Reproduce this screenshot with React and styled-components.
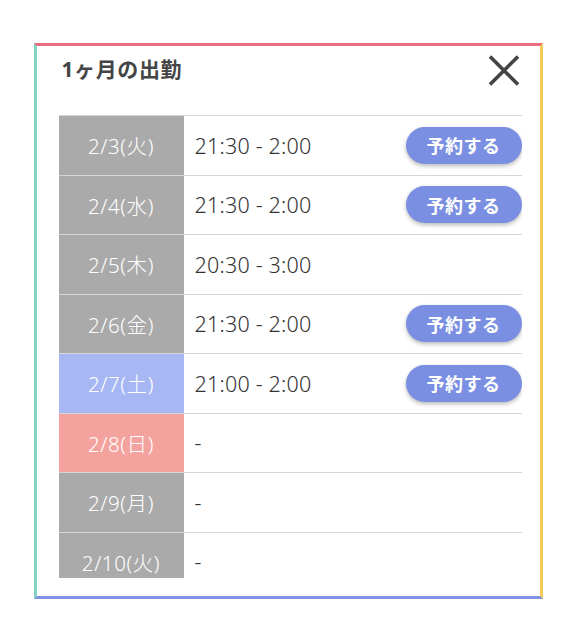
import React from "react";
import styled, { createGlobalStyle } from "styled-components";

const GlobalStyle = createGlobalStyle`
  html, body { margin: 0; padding: 0; background: #ffffff; }
  body { font-family: "Noto Sans", "Noto Sans CJK JP", sans-serif; }
  * { box-sizing: border-box; }
`;

const Card = styled.section`
  width: 509px;
  height: 556px;
  margin: 43px auto 0;
  background: #fff;
  border-top: 3px solid #ea6a80;
  border-right: 3px solid #f3cb5a;
  border-bottom: 3px solid #7f93e4;
  border-left: 3px solid #84d2c4;
  padding: 0 18px 18px 22px;
  display: flex;
  flex-direction: column;
`;

const Header = styled.header`
  height: 69px;
  flex: none;
  display: flex;
  justify-content: space-between;
  align-items: flex-start;
`;

const Title = styled.h2`
  margin: 8px 0 0 3px;
  font-family: "Noto Sans", "Noto Sans CJK JP", sans-serif;
  font-size: 21px;
  line-height: 30px;
  font-weight: 700;
  color: #454545;
  letter-spacing: 0.6px;
`;

const CloseButton = styled.button`
  margin: 9px 2px 0 0;
  padding: 0;
  width: 32px;
  height: 31px;
  border: none;
  background: none;
  display: flex;
  align-items: center;
  justify-content: center;
  cursor: pointer;
`;

const Scroller = styled.div`
  flex: 1;
  min-height: 0;
  overflow-y: auto;
  scrollbar-width: none;
  &::-webkit-scrollbar { display: none; }
  border-top: 1px solid #d6d6d6;
`;

const Row = styled.div`
  display: grid;
  grid-template-columns: 125px 1fr;
  height: 59.5px;
  border-bottom: 1px solid #d6d6d6;
`;

const dayColors = {
  weekday: "#aaaaaa",
  sat: "#a7b7f4",
  sun: "#f4a29e",
};

const DateCell = styled.div`
  background: ${(p) => dayColors[p.$kind]};
  color: #fff;
  display: flex;
  align-items: center;
  justify-content: center;
  font-size: 20.5px;
  font-weight: 300;
  letter-spacing: 0.6px;
`;

const TimeCell = styled.div`
  display: flex;
  align-items: center;
  justify-content: space-between;
  padding-left: 11px;
  font-size: 21.5px;
  font-weight: 350;
  color: #333;
  letter-spacing: 0.2px;
`;

const ReserveButton = styled.button`
  width: 116px;
  height: 37px;
  border: none;
  border-radius: 19px;
  background: #7b8fe2;
  color: #fff;
  font-family: "Noto Sans CJK JP", sans-serif;
  font-size: 18px;
  font-weight: 700;
  box-shadow: 0 2px 4px rgba(0, 0, 0, 0.28);
  cursor: pointer;
  padding: 0;
  letter-spacing: 0.5px;
`;

const rows = [
  { date: "2/3(火)", kind: "weekday", time: "21:30 - 2:00", book: true },
  { date: "2/4(水)", kind: "weekday", time: "21:30 - 2:00", book: true },
  { date: "2/5(木)", kind: "weekday", time: "20:30 - 3:00", book: false },
  { date: "2/6(金)", kind: "weekday", time: "21:30 - 2:00", book: true },
  { date: "2/7(土)", kind: "sat", time: "21:00 - 2:00", book: true },
  { date: "2/8(日)", kind: "sun", time: "-", book: false },
  { date: "2/9(月)", kind: "weekday", time: "-", book: false },
  { date: "2/10(火)", kind: "weekday", time: "-", book: false },
];

function CloseIcon() {
  return (
    <svg width="32" height="31" viewBox="0 0 32 31">
      <path
        d="M2 1.5 L30 29.5 M30 1.5 L2 29.5"
        stroke="#444"
        strokeWidth="3.6"
        fill="none"
      />
    </svg>
  );
}

export default function App() {
  return (
    <>
      <GlobalStyle />
      <Card>
        <Header>
          <Title>1ヶ月の出勤</Title>
          <CloseButton aria-label="閉じる">
            <CloseIcon />
          </CloseButton>
        </Header>
        <Scroller>
          {rows.map((r) => (
            <Row key={r.date}>
              <DateCell $kind={r.kind}>{r.date}</DateCell>
              <TimeCell>
                <span>{r.time}</span>
                {r.book && <ReserveButton>予約する</ReserveButton>}
              </TimeCell>
            </Row>
          ))}
        </Scroller>
      </Card>
    </>
  );
}
